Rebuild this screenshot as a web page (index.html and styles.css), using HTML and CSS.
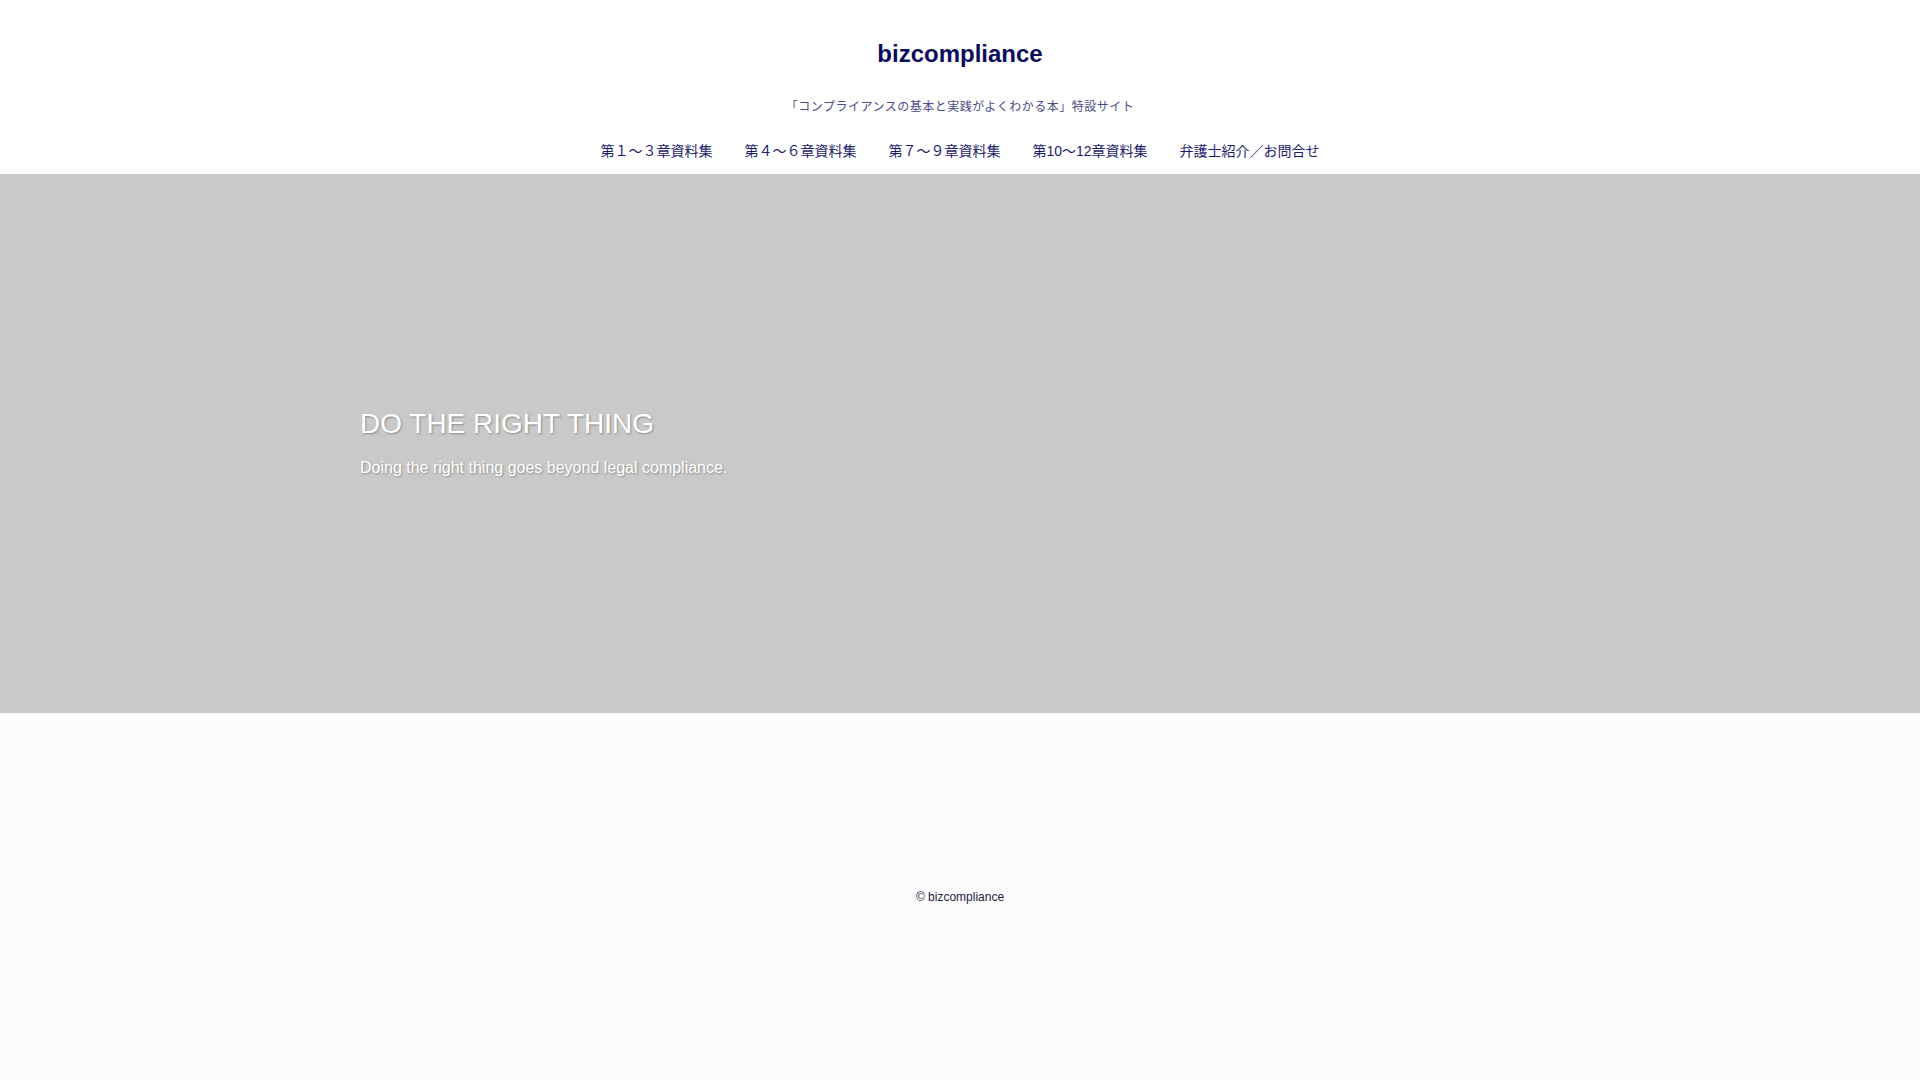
FILE: index.html
```html
<!DOCTYPE html>
<html lang="ja">
<head>
<meta charset="utf-8">
<title>bizcompliance</title>
<link rel="stylesheet" href="styles.css">
</head>
<body>
<header class="site-header">
  <h1 class="site-title">bizcompliance</h1>
  <p class="site-desc">「コンプライアンスの基本と実践がよくわかる本」特設サイト</p>
  <nav class="global-nav">
    <a href="#">第１～３章資料集</a>
    <a href="#">第４～６章資料集</a>
    <a href="#">第７～９章資料集</a>
    <a href="#">第10～12章資料集</a>
    <a href="#">弁護士紹介／お問合せ</a>
  </nav>
</header>
<section class="hero">
  <div class="hero-inner">
    <h2 class="hero-title">DO THE RIGHT THING</h2>
    <p class="hero-text">Doing the right thing goes beyond legal compliance.</p>
  </div>
</section>
<main class="content"></main>
<footer class="site-footer">
  <p class="copyright">© bizcompliance</p>
</footer>
</body>
</html>
```
FILE: styles.css
```css
html, body {
  margin: 0;
  padding: 0;
}
body {
  background: #fcfcfc;
  font-family: "Liberation Sans", "Noto Sans CJK JP", sans-serif;
  min-height: 1080px;
}
.site-header {
  background: #ffffff;
  padding: 40px 0 13px;
  text-align: center;
}
.site-title {
  margin: 0;
  font-size: 24px;
  line-height: 28px;
  font-weight: bold;
  color: #0b0b5c;
}
.site-desc {
  margin: 30px 0 0;
  font-size: 12px;
  line-height: 18px;
  letter-spacing: 0.5px;
  color: #4b4b85;
}
.global-nav {
  margin-top: 25px;
  display: flex;
  justify-content: center;
  gap: 32px;
}
.global-nav a {
  font-size: 14px;
  line-height: 20px;
  color: #1c1c6c;
  text-decoration: none;
}
.hero {
  background: #c9c9c9;
  height: 539px;
  display: flex;
  align-items: center;
}
.hero-inner {
  width: 1200px;
  margin: 0 auto;
  color: #ffffff;
  text-shadow: 1px 1px 2px rgba(0, 0, 0, 0.3);
}
.hero-title {
  margin: 0;
  font-size: 28px;
  line-height: 34px;
  font-weight: normal;
}
.hero-text {
  margin: 15px 0 0;
  font-size: 16px;
  line-height: 24px;
}
.content {
  height: 175px;
}
.site-footer {
  text-align: center;
}
.copyright {
  margin: 0;
  font-size: 12px;
  line-height: 18px;
  color: #1c1c44;
}
```
